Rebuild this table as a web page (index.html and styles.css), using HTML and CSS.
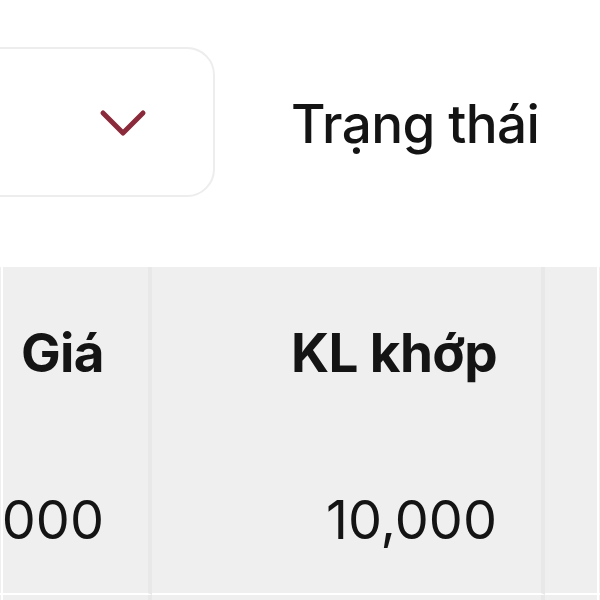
FILE: index.html
```html
<!DOCTYPE html>
<html lang="vi">
<head>
<meta charset="utf-8">
<link rel="stylesheet" href="styles.css">
</head>
<body>
<div class="filters">
  <div class="select">
    <svg class="chevron" width="48" height="30" viewBox="0 0 48 30"><path d="M4 5 L24 25 L44 5" fill="none" stroke="#8b2a3b" stroke-width="5" stroke-linecap="round" stroke-linejoin="round"/></svg>
  </div>
  <div class="label">Trạng thái</div>
</div>
<div class="table">
  <div class="row head">
    <div class="cell c-prev"></div>
    <div class="cell c-price">Giá</div>
    <div class="cell c-vol">KL khớp</div>
    <div class="cell c-status"></div>
    <div class="cell c-next"></div>
  </div>
  <div class="row data">
    <div class="cell c-prev"></div>
    <div class="cell c-price">10,000</div>
    <div class="cell c-vol">10,000</div>
    <div class="cell c-status"></div>
    <div class="cell c-next"></div>
  </div>
  <div class="row tail">
    <div class="cell c-prev"></div>
    <div class="cell c-price"></div>
    <div class="cell c-vol"></div>
    <div class="cell c-status"></div>
    <div class="cell c-next"></div>
  </div>
</div>
</body>
</html>
```
FILE: styles.css
```css
html, body {
  margin: 0;
  padding: 0;
  background: #ffffff;
  overflow: hidden;
}
body {
  width: 600px;
  height: 600px;
  font-family: Inter, "Noto Sans", sans-serif;
  color: #141414;
}
.filters {
  display: flex;
  align-items: center;
  height: 267px;
}
.select {
  box-sizing: border-box;
  width: 260px;
  height: 150px;
  margin-left: -45px;
  margin-top: -23px;
  border: 2px solid #ededed;
  border-radius: 28px;
  display: flex;
  align-items: center;
  justify-content: flex-end;
  padding-right: 66px;
  padding-top: 2px;
}
.label {
  margin-left: 76px;
  margin-top: -20px;
  font-size: 53px;
  font-weight: 500;
  letter-spacing: -0.6px;
}
.table {
  display: flex;
  flex-direction: column;
}
.row {
  display: flex;
}
.cell {
  background: #efefef;
  box-sizing: border-box;
  display: flex;
  align-items: center;
  justify-content: flex-end;
}
.head .cell {
  height: 168px;
  font-weight: 700;
  font-size: 53px;
  letter-spacing: -0.6px;
  padding-top: 4px;
}
.data .cell {
  height: 160px;
  font-size: 54px;
  font-weight: 400;
  border-bottom: 2px solid #ffffff;
  padding-top: 10px;
}
.tail .cell {
  height: 10px;
}
.c-prev {
  width: 1px;
}
.c-price {
  width: 151px;
  border-left: 2px solid #ffffff;
  border-right: 4px solid #e8e8e8;
  padding-right: 44px;
}
.c-vol {
  width: 393px;
  border-right: 4px solid #e8e8e8;
  padding-right: 44px;
}
.c-status {
  width: 54px;
  border-right: 2px solid #ffffff;
}
.c-next {
  flex: 1;
}
```
